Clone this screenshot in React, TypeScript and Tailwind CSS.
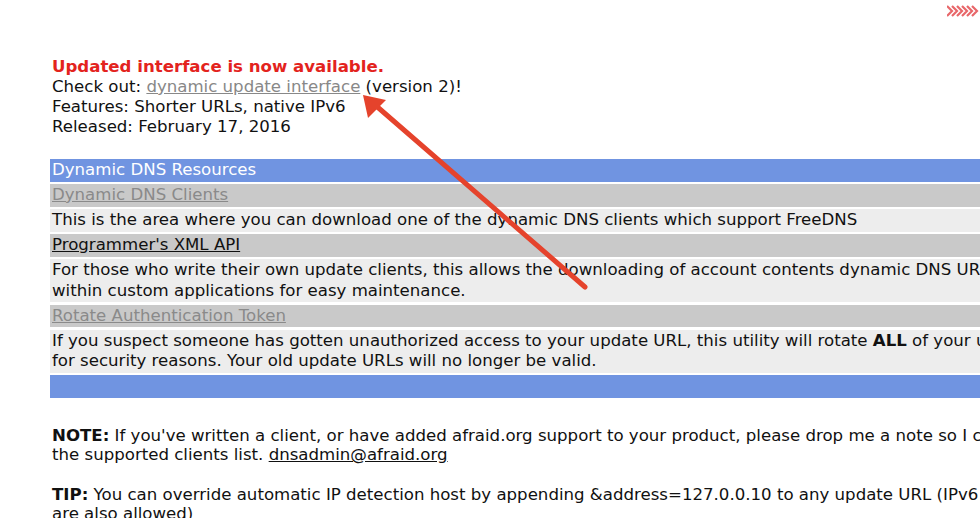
import React from "react";

function Row({ tone, children }: { tone: "blue" | "gray" | "light"; children?: React.ReactNode }) {
  const bg = tone === "blue" ? "bg-[#7094e1] text-white" : tone === "gray" ? "bg-[#c9c9c9]" : "bg-[#ededed]";
  return <div className={`${bg} min-h-[22.5px] px-[2px] py-[1px] whitespace-nowrap`}>{children}</div>;
}

export default function App() {
  return (
    <div
      className="relative w-[980px] h-[518px] overflow-hidden bg-white text-[#111] text-[16.6px] leading-[20px]"
      style={{ fontFamily: '"DejaVu Sans", Verdana, sans-serif' }}
    >
      {/* little chevrons, top right */}
      <svg className="absolute left-[947px] top-[5px]" width="34" height="12" viewBox="0 0 34 12">
        {[0, 5, 10, 15, 20, 25].map((x) => (
          <path key={x} d={`M${x} 1 L${x + 5} 6 L${x} 11`} fill="none" stroke="#e8676a" strokeWidth="2.2" />
        ))}
      </svg>

      <div className="pl-[50px] pt-[57px]">
        <div className="pl-[2px]">
          <div className="font-bold text-[#e3231d]">Updated interface is now available.</div>
          <div>
            Check out: <a className="text-[#888] underline">dynamic update interface</a> (version 2)!
          </div>
          <div>Features: Shorter URLs, native IPv6</div>
          <div>Released: February 17, 2016</div>
        </div>

        <div className="mt-[22px] w-[1100px] flex flex-col gap-[2.5px] leading-[20.5px]">
          <Row tone="blue">Dynamic DNS Resources</Row>
          <Row tone="gray">
            <a className="text-[#8a8a8a] underline">Dynamic DNS Clients</a>
          </Row>
          <Row tone="light">This is the area where you can download one of the dynamic DNS clients which support FreeDNS</Row>
          <Row tone="gray">
            <a className="text-[#111] underline">Programmer's XML API</a>
          </Row>
          <Row tone="light">
            For those who write their own update clients, this allows the downloading of account contents dynamic DNS URLs
            <br />
            within custom applications for easy maintenance.
          </Row>
          <Row tone="gray">
            <a className="text-[#8a8a8a] underline">Rotate Authentication Token</a>
          </Row>
          <Row tone="light">
            If you suspect someone has gotten unauthorized access to your update URL, this utility will rotate <b>ALL</b> of your update URLs
            <br />
            for security reasons. Your old update URLs will no longer be valid.
          </Row>
          <Row tone="blue" />
        </div>

        <div className="mt-[28px] pl-[2px] w-[1100px] leading-[19.5px]">
          <p className="whitespace-nowrap">
            <b>NOTE:</b> If you've written a client, or have added afraid.org support to your product, please drop me a note so I can add it to
            <br />
            the supported clients list. <a className="underline">dnsadmin@afraid.org</a>
          </p>
          <p className="mt-[20px] whitespace-nowrap">
            <b>TIP:</b> You can override automatic IP detection host by appending &amp;address=127.0.0.10 to any update URL (IPv6 addresses
            <br />
            are also allowed)
          </p>
        </div>
      </div>

      {/* annotation arrow */}
      <svg className="absolute left-0 top-0 pointer-events-none" width="980" height="518">
        <line x1="585" y1="287" x2="374" y2="104" stroke="#e5432c" strokeWidth="5" strokeLinecap="round" />
        <polygon points="363,95 386,100 368,118" fill="#e5432c" />
      </svg>
    </div>
  );
}
